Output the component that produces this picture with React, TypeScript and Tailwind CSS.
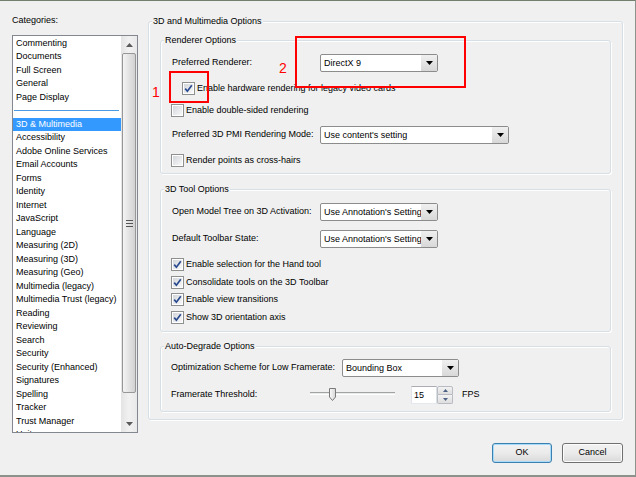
import React from "react";

const DownArrow = ({ color = "#000" }: { color?: string }) => (
  <svg width="7" height="4" viewBox="0 0 7 4">
    <path d="M0 0 L7 0 L3.5 4 Z" fill={color} />
  </svg>
);
const UpArrow = ({ color = "#000" }: { color?: string }) => (
  <svg width="7" height="4" viewBox="0 0 7 4">
    <path d="M0 4 L3.5 0 L7 4 Z" fill={color} />
  </svg>
);

const Dropdown = ({ text, className }: { text: string; className: string }) => (
  <div className={`flex h-[18px] items-stretch rounded-[2px] border border-[#8c8c8c] bg-white ${className}`}>
    <div className="flex-1 overflow-hidden whitespace-nowrap pl-[3px] leading-[16px]">{text}</div>
    <div className="flex w-[16px] items-center justify-center bg-gradient-to-b from-[#f0f0f0] to-[#d8d8d8]">
      <DownArrow />
    </div>
  </div>
);

const Checkbox = ({ checked }: { checked: boolean }) => (
  <div className="relative h-[13px] w-[13px] shrink-0 border border-[#8e8f8f] bg-white p-[1px]">
    <div className="h-full w-full bg-gradient-to-br from-[#d3d6db] to-[#f8f8f8]" />
    {checked && (
      <svg className="absolute left-0 top-0" width="11" height="11" viewBox="0 0 11 11">
        <path d="M2.2 5.6 L4.4 8.2 L8.8 2.2" fill="none" stroke="#2a4a8f" strokeWidth="1.7" />
      </svg>
    )}
  </div>
);

const CheckRow = ({ checked, label, className }: { checked: boolean; label: string; className: string }) => (
  <div className={`flex h-[13px] items-center gap-[2px] ${className}`}>
    <Checkbox checked={checked} />
    <span className="leading-[13px] whitespace-nowrap">{label}</span>
  </div>
);

const Title = ({ text }: { text: string }) => (
  <div className="ml-[3px] mt-[-7px] self-start bg-[#f0f0f0] px-[1px] leading-[12px]">{text}</div>
);

const topItems = ["Commenting", "Documents", "Full Screen", "General", "Page Display"];
const restItems = [
  "Accessibility",
  "Adobe Online Services",
  "Email Accounts",
  "Forms",
  "Identity",
  "Internet",
  "JavaScript",
  "Language",
  "Measuring (2D)",
  "Measuring (3D)",
  "Measuring (Geo)",
  "Multimedia (legacy)",
  "Multimedia Trust (legacy)",
  "Reading",
  "Reviewing",
  "Search",
  "Security",
  "Security (Enhanced)",
  "Signatures",
  "Spelling",
  "Tracker",
  "Trust Manager",
  "Units",
];

const Row = ({ text }: { text: string }) => (
  <div className="h-[13.5px] shrink-0 whitespace-nowrap pl-[3px] leading-[13.5px]">{text}</div>
);

const groupCls =
  "flex flex-col rounded-[3px] border border-[#d5dfe5] shadow-[inset_1px_1px_0_#ffffff,1px_1px_0_#ffffff]";

export default function App() {
  return (
    <div className="relative h-[477px] w-[636px] overflow-hidden border-t border-r border-b-2 border-t-[#74806e] border-r-[#8d918b] border-b-[#8d918b] bg-[#f0f0f0] font-['Liberation_Sans',Arial,sans-serif] text-[9px] text-black">
      <div className="flex pl-[12px] pt-[14px]">
        {/* Categories */}
        <div className="flex w-[126px] flex-col">
          <div className="mt-[-1px] h-[12px] leading-[12px]">Categories:</div>
          <div className="mt-[9px] flex h-[398px] border border-[#828790] bg-white">
            <div className="flex flex-1 flex-col overflow-hidden pt-[0.5px]">
              {topItems.map((t) => (
                <Row key={t} text={t} />
              ))}
              <div className="flex h-[13.5px] shrink-0 items-center">
                <div className="ml-[1px] mr-[2px] h-[1px] flex-1 bg-[#4b9be3]" />
              </div>
              <div className="h-[13.5px] shrink-0 whitespace-nowrap bg-[#3399ff] pl-[3px] leading-[13.5px] text-white">
                3D &amp; Multimedia
              </div>
              {restItems.map((t) => (
                <Row key={t} text={t} />
              ))}
            </div>
            {/* Scrollbar */}
            <div className="flex w-[16px] flex-col bg-gradient-to-r from-[#e4e4e4] via-[#f1f1f1] to-[#e9e9e9]">
              <div className="flex h-[17px] items-center justify-center">
                <UpArrow color="#5a5a5a" />
              </div>
              <div className="mx-[1px] flex h-[340px] flex-col items-center justify-center gap-[2px] rounded-[2px] border border-[#979797] bg-gradient-to-r from-[#f4f4f4] to-[#d2d2d2]">
                <div className="h-[1px] w-[7px] bg-[#555]" />
                <div className="h-[1px] w-[7px] bg-[#555]" />
                <div className="h-[1px] w-[7px] bg-[#555]" />
              </div>
              <div className="flex-1" />
              <div className="flex h-[17px] items-center justify-center">
                <DownArrow color="#5a5a5a" />
              </div>
            </div>
          </div>
        </div>

        {/* Options */}
        <div className={`ml-[10px] mt-[6px] h-[399px] w-[475px] ${groupCls}`}>
          <Title text="3D and Multimedia Options" />
          <div className="flex flex-col px-[11px]">
            {/* Renderer */}
            <div className={`mt-[13px] h-[134px] ${groupCls}`}>
              <Title text="Renderer Options" />
              <div className="flex flex-col pl-[11px]">
                <div className="mt-[8px] flex h-[18px] items-center">
                  <span className="w-[148px]">Preferred Renderer:</span>
                  <Dropdown text="DirectX 9" className="w-[118px]" />
                </div>
                <CheckRow checked label="Enable hardware rendering for legacy video cards" className="ml-[10px] mt-[10px]" />
                <CheckRow checked={false} label="Enable double-sided rendering" className="ml-[-1px] mt-[9px]" />
                <div className="mt-[9px] flex h-[18px] items-center">
                  <span className="w-[148px]">Preferred 3D PMI Rendering Mode:</span>
                  <Dropdown text="Use content's setting" className="w-[189px]" />
                </div>
                <CheckRow checked={false} label="Render points as cross-hairs" className="ml-[-1px] mt-[10px]" />
              </div>
            </div>

            {/* 3D Tool */}
            <div className={`mt-[15px] h-[143px] ${groupCls}`}>
              <Title text="3D Tool Options" />
              <div className="flex flex-col pl-[11px]">
                <div className="mt-[8px] flex h-[18px] items-center">
                  <span className="w-[148px]">Open Model Tree on 3D Activation:</span>
                  <Dropdown text="Use Annotation's Setting" className="w-[118px]" />
                </div>
                <div className="mt-[9px] flex h-[18px] items-center">
                  <span className="w-[148px]">Default Toolbar State:</span>
                  <Dropdown text="Use Annotation's Setting" className="w-[118px]" />
                </div>
                <CheckRow checked label="Enable selection for the Hand tool" className="ml-[-1px] mt-[10px]" />
                <CheckRow checked label="Consolidate tools on the 3D Toolbar" className="ml-[-1px] mt-[4.5px]" />
                <CheckRow checked label="Enable view transitions" className="ml-[-1px] mt-[4.5px]" />
                <CheckRow checked label="Show 3D orientation axis" className="ml-[-1px] mt-[4.5px]" />
              </div>
            </div>

            {/* Auto-Degrade */}
            <div className={`mt-[14px] h-[66px] ${groupCls}`}>
              <Title text="Auto-Degrade Options" />
              <div className="flex flex-col pl-[10px]">
                <div className="mt-[7px] flex h-[18px] items-center">
                  <span className="w-[171px]">Optimization Scheme for Low Framerate:</span>
                  <Dropdown text="Bounding Box" className="w-[117px]" />
                </div>
                <div className="mt-[9px] flex h-[18px] items-center">
                  <span className="w-[139px]">Framerate Threshold:</span>
                  <div className="relative h-[18px] w-[85px]">
                    <div className="absolute left-0 right-0 top-[6px] h-[2px] border-t border-[#a3a3a3] bg-[#e7eaea] shadow-[0_1px_0_#ffffff]" />
                    <svg className="absolute left-[19px] top-[2px]" width="7" height="13" viewBox="0 0 7 13">
                      <defs>
                        <linearGradient id="thumbg" x1="0" y1="0" x2="1" y2="0">
                          <stop offset="0" stopColor="#fbfbfb" />
                          <stop offset="1" stopColor="#d6d6d6" />
                        </linearGradient>
                      </defs>
                      <path d="M0.5 0.5 H6.5 V9 L3.5 12.5 L0.5 9 Z" fill="url(#thumbg)" stroke="#7a7a7a" strokeWidth="1" />
                    </svg>
                  </div>
                  <div className="ml-[16px] h-[18px] w-[26px] border border-[#abadb3] border-b-[#e3e9ef] border-l-[#e2e3ea] border-r-[#dbdfe6] bg-white pl-[2px] leading-[16px]">
                    15
                  </div>
                  <div className="flex h-[18px] w-[16px] flex-col">
                    <div className="flex h-[9px] items-center justify-center rounded-t-[2px] border border-[#b8bcc2] bg-gradient-to-b from-[#f3f3f3] to-[#dedede]">
                      <svg width="5" height="3" viewBox="0 0 5 3">
                        <path d="M0 3 L2.5 0 L5 3 Z" fill="#4d6185" />
                      </svg>
                    </div>
                    <div className="flex h-[9px] items-center justify-center rounded-b-[2px] border border-t-0 border-[#b8bcc2] bg-gradient-to-b from-[#f3f3f3] to-[#dedede]">
                      <svg width="5" height="3" viewBox="0 0 5 3">
                        <path d="M0 0 L5 0 L2.5 3 Z" fill="#4d6185" />
                      </svg>
                    </div>
                  </div>
                  <span className="ml-[9px]">FPS</span>
                </div>
              </div>
            </div>
          </div>
        </div>
      </div>

      {/* Buttons */}
      <div className="mt-[10px] flex justify-end gap-[10px] pr-[12px]">
        <div className="flex h-[20px] w-[60px] items-center justify-center rounded-[3px] border border-[#3c7fb1] bg-gradient-to-b from-[#f2f2f2] via-[#ebebeb] to-[#d9d9d9] shadow-[inset_0_0_0_1px_#a6dcf7]">
          OK
        </div>
        <div className="flex h-[20px] w-[61px] items-center justify-center rounded-[3px] border border-[#707070] bg-gradient-to-b from-[#f2f2f2] via-[#ebebeb] to-[#d9d9d9] shadow-[inset_0_0_0_1px_#fcfcfc]">
          Cancel
        </div>
      </div>

      {/* Red annotations */}
      <div className="absolute left-[169px] top-[70px] h-[32px] w-[40px] border-2 border-[#ff0000]" />
      <div className="absolute left-[295px] top-[35px] h-[52px] w-[171px] border-2 border-[#ff0000]" />
      <div className="absolute left-[152px] top-[84px] text-[14px] leading-[14px] text-[#ff0000]">1</div>
      <div className="absolute left-[279px] top-[60px] text-[14px] leading-[14px] text-[#ff0000]">2</div>
    </div>
  );
}
